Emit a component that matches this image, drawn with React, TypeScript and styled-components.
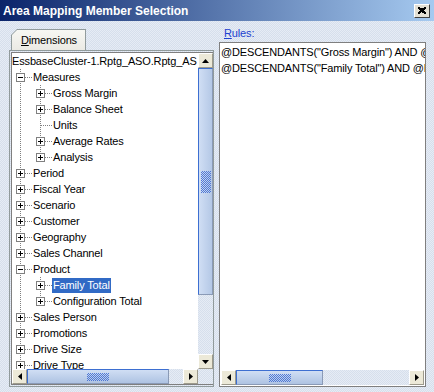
import React from 'react';
import styled, { createGlobalStyle, css } from 'styled-components';

const GlobalStyle = createGlobalStyle`
  html, body { margin: 0; padding: 0; }
  body {
    font-family: "Liberation Sans", Arial, sans-serif;
    font-size: 11px;
    letter-spacing: -0.15px;
    color: #000;
  }
`;

// light blue dotted backdrop used by the dialog and the scroll tracks
const dotted = css`
  background-color: #e6ecf5;
  background-image: repeating-conic-gradient(#d6dfec 0 25%, transparent 0 50%);
  background-size: 2px 2px;
`;

const Window = styled.div`
  width: 434px;
  height: 392px;
  display: flex;
  flex-direction: column;
  overflow: hidden;
  ${dotted}
`;

const TitleBar = styled.div`
  height: 21px;
  flex: none;
  display: flex;
  align-items: center;
  justify-content: space-between;
  padding: 0 4px 0 3px;
  background: linear-gradient(to right, #0a246a, #a6caf0);
  color: #fff;
  font-weight: bold;
  font-size: 12px;
  letter-spacing: 0;
`;

const CloseButton = styled.div`
  width: 16px;
  height: 14px;
  box-sizing: border-box;
  display: flex;
  align-items: center;
  justify-content: center;
  background: #e4e0d4;
  border: 1px solid;
  border-color: #fff #404040 #404040 #fff;
`;

const Body = styled.div`
  flex: 1;
  min-height: 0;
  display: flex;
  gap: 5px;
  padding: 0 0 5px 9px;
`;

const LeftColumn = styled.div`
  width: 205px;
  display: flex;
  flex-direction: column;
  padding-top: 8px;
`;

const TabStrip = styled.div`
  display: flex;
  padding-left: 2px;
`;

// selected tab: outer layer is the border colour, inner layer the face
const TabEdge = styled.div`
  width: 75px;
  height: 21px;
  background: #919b9c;
  clip-path: polygon(6px 0, 100% 0, 100% 100%, 0 100%, 0 6px);
  display: flex;
  padding: 1px 1px 0 1px;
  box-sizing: border-box;
`;

const TabFace = styled.div`
  flex: 1;
  background: linear-gradient(#f7f7f3, #ebeae4);
  clip-path: polygon(5px 0, 100% 0, 100% 100%, 0 100%, 0 5px);
  display: flex;
  align-items: center;
  padding: 0 0 1px 9px;
`;

const Mnemonic = styled.span`
  text-decoration: underline;
`;

const TabPanel = styled.div`
  flex: 1;
  min-height: 0;
  display: flex;
  border: 1px solid #919b9c;
  padding: 1px 0 1px 1px;
`;

const ScrollPane = styled.div`
  flex: 1;
  min-height: 0;
  display: grid;
  grid-template-columns: 1fr 15px;
  grid-template-rows: 1fr 15px;
  border: 1px solid #7f7f7f;
  border-right: none;
`;

const Viewport = styled.div`
  background: #fff;
  overflow: hidden;
`;

const TreeRow = styled.div`
  display: flex;
  align-items: center;
  height: 16px;
`;

const GuideSvg = styled.svg`
  flex: none;
  display: block;
`;

const NodeLabel = styled.span<{ $selected?: boolean; $root?: boolean }>`
  height: 15px;
  line-height: 15px;
  padding: ${p => (p.$root ? '0' : '0 1px')};
  white-space: nowrap;
  ${p =>
    p.$selected &&
    css`
      background: #316ac5;
      color: #fff;
    `}
`;

const VScroll = styled.div`
  display: flex;
  flex-direction: column;
  ${dotted}
`;

const HScroll = styled.div`
  display: flex;
  ${dotted}
`;

const ArrowButton = styled.div`
  width: 15px;
  height: 15px;
  flex: none;
  box-sizing: border-box;
  display: flex;
  align-items: center;
  justify-content: center;
  background: #ece9d8;
  border: 1px solid;
  border-color: #fff #9d9a8c #9d9a8c #fff;
`;

const Track = styled.div`
  flex: 1;
`;

const Thumb = styled.div<{ $vertical?: boolean; $size: number }>`
  flex: none;
  box-sizing: border-box;
  display: flex;
  align-items: center;
  justify-content: center;
  border: 1px solid #8a9ab6;
  border-top-color: #3d6fd1;
  border-left-color: #3d6fd1;
  ${p =>
    p.$vertical
      ? css`
          height: ${p.$size}px;
          background: linear-gradient(to right, #d0def4, #b4c8e6);
        `
      : css`
          width: ${p.$size}px;
          background: linear-gradient(#d0def4, #aec3e2);
        `}
`;

const Grip = styled.div<{ $vertical?: boolean }>`
  width: ${p => (p.$vertical ? 10 : 22)}px;
  height: ${p => (p.$vertical ? 22 : 8)}px;
  background-image: repeating-conic-gradient(#4f78d6 0 25%, transparent 0 50%);
  background-size: 2px 2px;
`;

const Corner = styled.div``;

const RightColumn = styled.div`
  width: 207px;
  display: flex;
  flex-direction: column;
  padding-top: 4px;
`;

const FieldLabel = styled.div`
  height: 16px;
  line-height: 16px;
  padding-left: 5px;
  margin-bottom: 1px;
  color: #1c3fd0;
`;

const RulesBox = styled.div`
  flex: 1;
  min-height: 0;
  display: flex;
  flex-direction: column;
  border: 1px solid #7f7f7f;
  background: #fff;
`;

const RulesList = styled.div`
  flex: 1;
  overflow: hidden;
  padding: 1px 1px 0 1px;
`;

const RuleLine = styled.div`
  height: 16px;
  line-height: 16px;
  white-space: nowrap;
`;

const RulesScroll = styled(HScroll)`
  height: 15px;
  margin: 0 1px 1px 1px;
`;

type Dir = 'up' | 'down' | 'left' | 'right';

const Arrow = ({ dir }: { dir: Dir }) => {
  const pts = {
    up: '0,4 7,4 3.5,0',
    down: '0,0 7,0 3.5,4',
    left: '4,0 4,7 0,3.5',
    right: '0,0 0,7 4,3.5',
  }[dir];
  const horiz = dir === 'left' || dir === 'right';
  return (
    <svg width={horiz ? 4 : 7} height={horiz ? 7 : 4}>
      <polygon points={pts} fill="#000" />
    </svg>
  );
};

type Guide = { v: 'full' | 'top' | 'none'; branch?: boolean; box?: '+' | '-' };

const TreeGuide = ({ g }: { g: Guide }) => (
  <GuideSvg width={20} height={16} shapeRendering="crispEdges">
    {g.v !== 'none' && (
      <line x1={8.5} y1={0} x2={8.5} y2={g.v === 'full' ? 16 : 9} stroke="#808080" strokeDasharray="1 1" />
    )}
    {g.branch && <line x1={9} y1={8.5} x2={20} y2={8.5} stroke="#808080" strokeDasharray="1 1" />}
    {g.box && (
      <>
        <rect x={4.5} y={4.5} width={8} height={8} fill="#fff" stroke="#808080" />
        <line x1={6} y1={8.5} x2={11} y2={8.5} stroke="#000" />
        {g.box === '+' && <line x1={8.5} y1={6} x2={8.5} y2={11} stroke="#000" />}
      </>
    )}
  </GuideSvg>
);

type TreeNode = { label: string; guides: Guide[]; selected?: boolean };

const top = (box?: '+' | '-'): Guide[] => [{ v: 'full', branch: true, box }];
const child = (box?: '+', last?: boolean): Guide[] => [
  { v: 'full' },
  { v: last ? 'top' : 'full', branch: true, box },
];

const nodes: TreeNode[] = [
  { label: 'Measures', guides: top('-') },
  { label: 'Gross Margin', guides: child('+') },
  { label: 'Balance Sheet', guides: child('+') },
  { label: 'Units', guides: child() },
  { label: 'Average Rates', guides: child('+') },
  { label: 'Analysis', guides: child('+', true) },
  { label: 'Period', guides: top('+') },
  { label: 'Fiscal Year', guides: top('+') },
  { label: 'Scenario', guides: top('+') },
  { label: 'Customer', guides: top('+') },
  { label: 'Geography', guides: top('+') },
  { label: 'Sales Channel', guides: top('+') },
  { label: 'Product', guides: top('-') },
  { label: 'Family Total', guides: child('+'), selected: true },
  { label: 'Configuration Total', guides: child('+', true) },
  { label: 'Sales Person', guides: top('+') },
  { label: 'Promotions', guides: top('+') },
  { label: 'Drive Size', guides: top('+') },
  { label: 'Drive Type', guides: top('+') },
];

const rules = ['@DESCENDANTS("Gross Margin") AND @', '@DESCENDANTS("Family Total") AND @L'];

export default function App() {
  return (
    <>
      <GlobalStyle />
      <Window>
        <TitleBar>
          <span>Area Mapping Member Selection</span>
          <CloseButton>
            <svg width={8} height={7} shapeRendering="crispEdges">
              <path d="M0 0 L8 7 M1 0 L8 6 M0 1 L7 7 M8 0 L0 7 M7 0 L0 6 M8 1 L1 7" stroke="#000" strokeWidth={1} />
            </svg>
          </CloseButton>
        </TitleBar>
        <Body>
          <LeftColumn>
            <TabStrip>
              <TabEdge>
                <TabFace>
                  <span>
                    <Mnemonic>D</Mnemonic>imensions
                  </span>
                </TabFace>
              </TabEdge>
            </TabStrip>
            <TabPanel>
              <ScrollPane>
                <Viewport>
                  <TreeRow>
                    <NodeLabel $root>EssbaseCluster-1.Rptg_ASO.Rptg_AS</NodeLabel>
                  </TreeRow>
                  {nodes.map(n => (
                    <TreeRow key={n.label}>
                      {n.guides.map((g, i) => (
                        <TreeGuide key={i} g={g} />
                      ))}
                      <NodeLabel $selected={n.selected}>{n.label}</NodeLabel>
                    </TreeRow>
                  ))}
                </Viewport>
                <VScroll>
                  <ArrowButton>
                    <Arrow dir="up" />
                  </ArrowButton>
                  <Thumb $vertical $size={227}>
                    <Grip $vertical />
                  </Thumb>
                  <Track />
                  <ArrowButton>
                    <Arrow dir="down" />
                  </ArrowButton>
                </VScroll>
                <HScroll>
                  <ArrowButton>
                    <Arrow dir="left" />
                  </ArrowButton>
                  <Thumb $size={142}>
                    <Grip />
                  </Thumb>
                  <Track />
                  <ArrowButton>
                    <Arrow dir="right" />
                  </ArrowButton>
                </HScroll>
                <Corner />
              </ScrollPane>
            </TabPanel>
          </LeftColumn>
          <RightColumn>
            <FieldLabel>
              <Mnemonic>R</Mnemonic>ules:
            </FieldLabel>
            <RulesBox>
              <RulesList>
                {rules.map(r => (
                  <RuleLine key={r}>{r}</RuleLine>
                ))}
              </RulesList>
              <RulesScroll>
                <ArrowButton>
                  <Arrow dir="left" />
                </ArrowButton>
                <Thumb $size={87}>
                  <Grip />
                </Thumb>
                <Track />
                <ArrowButton>
                  <Arrow dir="right" />
                </ArrowButton>
              </RulesScroll>
            </RulesBox>
          </RightColumn>
        </Body>
      </Window>
    </>
  );
}
